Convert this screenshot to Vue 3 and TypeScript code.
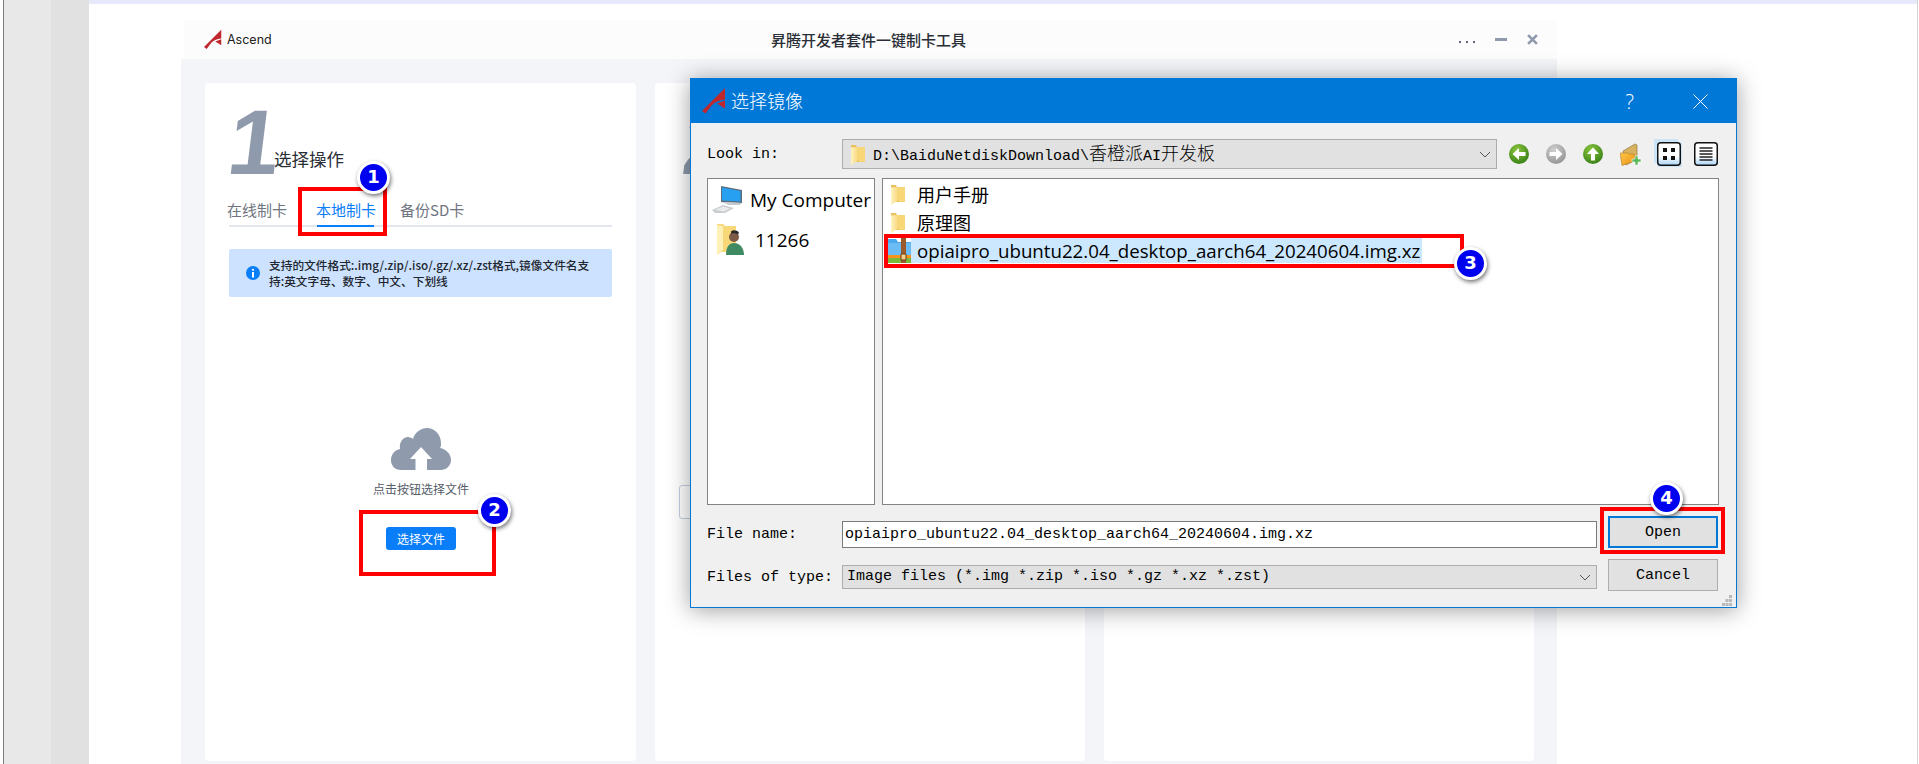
<script setup lang="ts">
const tabs = ['在线制卡', '本地制卡', '备份SD卡'];
const folders = ['用户手册', '原理图'];
const marks = [1, 2, 3, 4];
const fileName = 'opiaipro_ubuntu22.04_desktop_aarch64_20240604.img.xz';
</script>

<template>
  <div class="page">
    <svg class="defs" width="0" height="0" aria-hidden="true">
      <defs>
        <linearGradient id="folderFill" x1="0" x2="1" y1="0" y2="0">
          <stop offset="0" stop-color="#fff3c4" />
          <stop offset="1" stop-color="#f7d36f" />
        </linearGradient>
        <radialGradient id="greenFill" cx="0.4" cy="0.3" r="0.8">
          <stop offset="0" stop-color="#8cc63f" />
          <stop offset="1" stop-color="#2f7a12" />
        </radialGradient>
        <radialGradient id="grayFill" cx="0.4" cy="0.3" r="0.8">
          <stop offset="0" stop-color="#d0d0d0" />
          <stop offset="1" stop-color="#8f8f8f" />
        </radialGradient>
        <linearGradient id="buttonFill" x1="0" x2="0" y1="0" y2="1">
          <stop offset="0" stop-color="#ffffff" />
          <stop offset="0.6" stop-color="#ffffff" />
          <stop offset="1" stop-color="#a9d3f7" />
        </linearGradient>
        <linearGradient id="newFolderFill" x1="0" x2="1" y1="0" y2="1">
          <stop offset="0" stop-color="#ffc94d" />
          <stop offset="1" stop-color="#ea8f10" />
        </linearGradient>
        <symbol id="logo" viewBox="0 0 24 26">
          <path d="M0 23 23 0V11.500C17 12 12.500 14 9.500 17.500L3.500 25.500Z" fill="#c0272d" />
          <path d="M15 15.500 23 12.500V20.500z" fill="#c0272d" />
        </symbol>
        <symbol id="folder" viewBox="0 0 14 21">
          <path d="M0 1h5l1 2h8v15H2l-2 3z" fill="#e9c25f" />
          <path d="M0 3.500 8 3v13L0 21z" fill="url(#folderFill)" />
          <path d="M8 3h6v15H8z" fill="#f8d779" />
        </symbol>
      </defs>
    </svg>

    <div class="rail-edge"></div>
    <div class="rail-light"></div>
    <div class="rail-dark"></div>

    <main class="main">
      <div class="strip"></div>
      <section class="window">
        <header class="win-head">
          <div class="brand">
            <svg class="brand-logo"><use href="#logo" /></svg>
            <span class="brand-name">Ascend</span>
          </div>
          <div class="win-title">昇腾开发者套件一键制卡工具</div>
          <div class="win-ctrls">
            <span class="dots"><i></i><i></i><i></i></span>
            <span class="minus"></span>
            <svg class="close" viewBox="0 0 10 10">
              <path d="M1 1l8 8M9 1l-8 8" stroke="#8f9aac" stroke-width="2.400" fill="none" />
            </svg>
          </div>
        </header>

        <div class="win-body">
          <article class="card">
            <div class="step">
              <span class="step-num">1</span>
              <span class="step-title">选择操作</span>
            </div>
            <nav class="tabs">
              <span v-for="(t, i) in tabs" :key="t" class="tab" :class="{ active: i === 1 }">{{ t }}</span>
            </nav>
            <div class="notice">
              <svg class="notice-icon" viewBox="0 0 14 14">
                <circle cx="7" cy="7" r="7" fill="#0a7df9" />
                <circle cx="7" cy="3.800" r="1.100" fill="#fff" />
                <path d="M6 6h2v5.500H6z" fill="#fff" />
              </svg>
              <p>支持的文件格式:.img/.zip/.iso/.gz/.xz/.zst格式,镜像文件名支持:英文字母、数字、中文、下划线</p>
            </div>
            <div class="upload">
              <svg class="cloud" viewBox="0 0 60 42">
                <path d="M10 42C4 42 0 38 0 32c0-6 4-10 9-11C8 14 12 9 17 9c2 0 4 1 5 2C24 4 30 0 36 0c8 0 14 7 14 15 0 2 0 4-1 5 6 1 11 6 11 12 0 6-5 10-10 10z" fill="#8f9aac" />
                <path d="M30 19 41 31h-5v11H24.500V31H19z" fill="#fff" />
              </svg>
              <div class="upload-text">点击按钮选择文件</div>
              <button class="upload-btn">选择文件</button>
            </div>
          </article>

          <article class="card">
            <div class="step">
              <span class="step-num step-num-hidden">2</span>
            </div>
            <div class="ghost-input"></div>
          </article>

          <article class="card"></article>
        </div>
      </section>
    </main>

    <div class="rail-line"></div>

    <!-- file dialog floating over the app -->
    <section class="dialog">
      <header class="dlg-title">
        <svg class="dlg-logo"><use href="#logo" /></svg>
        <span class="dlg-name">选择镜像</span>
        <span class="dlg-help">?</span>
        <svg class="dlg-close" viewBox="0 0 15 15">
          <path d="M.500.500l14 14M14.500.500l-14 14" stroke="#fff" stroke-width="1" fill="none" />
        </svg>
      </header>

      <div class="dlg-body">
        <div class="row-top">
          <label class="dlg-label">Look in:</label>
          <div class="combo combo-path">
            <svg class="path-folder"><use href="#folder" /></svg>
            <span class="mono path-text">D:\BaiduNetdiskDownload\<span class="cjk">香橙派</span>AI<span class="cjk">开发板</span></span>
            <svg class="chev" viewBox="0 0 12 7"><path d="M1 1l5 5 5-5" stroke="#555" fill="none" /></svg>
          </div>
          <div class="tools">
            <svg class="round" viewBox="0 0 20 20">
              <circle cx="10" cy="10" r="10" fill="url(#greenFill)" />
              <path d="M3.500 10 10 4v4h6.500v4H10v4z" fill="#fff" />
            </svg>
            <svg class="round" viewBox="0 0 20 20">
              <circle cx="10" cy="10" r="10" fill="url(#grayFill)" />
              <path d="M16.500 10 10 4v4H3.500v4H10v4z" fill="#fff" />
            </svg>
            <svg class="round" viewBox="0 0 20 20">
              <circle cx="10" cy="10" r="10" fill="url(#greenFill)" />
              <path d="M10 3.500 16 10h-4v6.500H8V10H4z" fill="#fff" />
            </svg>
            <svg class="new-folder" viewBox="0 0 22 23">
              <path d="M3 8 15 1l2 1v14L6 22z" fill="#d8b25f" stroke="#8a6a34" stroke-width=".6" />
              <path d="M0 10h8l1 1h5l1 7L2 22.500z" fill="url(#newFolderFill)" stroke="#a86f1c" stroke-width=".5" />
              <path d="M15 13h3v3h3v3h-3v3h-3v-3h-3v-3h3z" fill="#5cb85c" stroke="#fff" stroke-width=".6" />
            </svg>
            <span class="view-btn view-on">
              <svg viewBox="0 0 24 24">
                <rect x=".750" y=".750" width="22.500" height="22.500" rx="3" fill="url(#buttonFill)" stroke="#111" stroke-width="1.500" />
                <path d="M6 6h4v4H6zM14 6h4v4h-4zM6 14h4v4H6zM14 14h4v4h-4z" fill="#111" />
              </svg>
            </span>
            <span class="view-btn">
              <svg viewBox="0 0 24 24">
                <rect x=".750" y=".750" width="22.500" height="22.500" rx="3" fill="url(#buttonFill)" stroke="#111" stroke-width="1.500" />
                <path d="M5.500 6h13M5.500 9h13M5.500 12h13M5.500 15h13M5.500 18h13" stroke="#222" stroke-width="1.300" />
              </svg>
            </span>
          </div>
        </div>

        <div class="row-lists">
          <aside class="side-list">
            <div class="side-item side-pc">
              <svg class="pc-icon" viewBox="0 0 31 27">
                <path d="M9 0l21 4v13L9 16z" fill="#5a6d7d" />
                <path d="M10 1.500 28.500 5v10.500L10 14.500z" fill="#27a0f2" />
                <path d="M9 16l21 1-2 2-11 0z" fill="#c4cbd0" />
                <path d="M0 24l11-5 11 3-9 5H3z" fill="#c9cdd0" />
                <path d="M3 24l8-3.500 7 2-6 3z" fill="#e9ebec" />
              </svg>
              <span>My Computer</span>
            </div>
            <div class="side-item side-user">
              <svg class="user-icon" viewBox="0 0 27 31">
                <path d="M0 0h6l2 2h11v26H4l-4 3z" fill="#f8d779" />
                <path d="M0 1l6 1v24l-6 5z" fill="#fff0b8" />
                <circle cx="17" cy="13" r="5" fill="#7d5a46" />
                <path d="M14 7.500c2-2 6-1.500 8 1l-1 2c-2-1.500-5-1.500-7-1z" fill="#2a2a2a" />
                <path d="M9 31c0-8 3-12 8-12s10 4 10 12z" fill="#3f8a63" />
              </svg>
              <span>11266</span>
            </div>
          </aside>
          <div class="file-list">
            <div v-for="f in folders" :key="f" class="file-row">
              <svg class="row-folder"><use href="#folder" /></svg>
              <span class="cn">{{ f }}</span>
            </div>
            <div class="file-row file-sel">
              <svg class="zip-icon" viewBox="0 0 23 25">
                <path d="M0 1h8l2 3h13v14H0z" fill="#4aa8ec" />
                <path d="M0 5h23v13H0z" fill="#6bbcf5" />
                <path d="M0 17h23v3H0z" fill="#f7941d" />
                <path d="M0 20h23v5H0z" fill="#7ab93a" />
                <path d="M13 0h5v25h-5z" fill="#9a5a2b" />
                <path d="M13 16h5v6h-5z" fill="#f5d08a" stroke="#6b3d1a" />
              </svg>
              <span class="sel-text">{{ fileName }}</span>
            </div>
          </div>
        </div>

        <div class="row-file">
          <label class="dlg-label">File name:</label>
          <div class="name-input mono">{{ fileName }}</div>
          <button class="dlg-btn dlg-primary mono">Open</button>
        </div>
        <div class="row-type">
          <label class="dlg-label">Files of type:</label>
          <div class="combo combo-type">
            <span class="mono">Image files (*.img *.zip *.iso *.gz *.xz *.zst)</span>
            <svg class="chev" viewBox="0 0 12 7"><path d="M1 1l5 5 5-5" stroke="#555" fill="none" /></svg>
          </div>
          <button class="dlg-btn mono">Cancel</button>
        </div>
      </div>

      <svg class="grip" viewBox="0 0 10 11">
        <path d="M7 0h3v3H7zM3.500 4H6.500v3H3.500zM7 4h3v3H7zM0 8h3v3H0zM3.500 8H6.500v3H3.500zM7 8h3v3H7z" fill="#b9b9b9" />
      </svg>
    </section>

    <!-- tutorial annotations drawn on top of the screenshot -->
    <div class="frame frame-1"></div>
    <div class="frame frame-2"></div>
    <div class="frame frame-3"></div>
    <div class="frame frame-4"></div>
    <span v-for="m in marks" :key="m" class="badge" :class="`badge-${m}`">{{ m }}</span>
  </div>
</template>

<style scoped>
.page {
  position: relative;
  display: flex;
  width: 1919px;
  height: 764px;
  overflow: hidden;
  background: #fff;
  font-family: "Noto Sans CJK SC", "Noto Sans", sans-serif;
}

.defs {
  position: absolute;
}

.rail-edge {
  width: 3px;
  border-right: 1px solid #7c7c7c;
}

.rail-light {
  width: 47px;
  background: #e8e8e8;
}

.rail-dark {
  width: 38px;
  background: #e1e1e1;
}

.main {
  flex: 1;
  min-width: 0;
}

.rail-line {
  width: 1px;
  margin-right: 1px;
  background: #d4d4d4;
}

.strip {
  height: 4px;
  background: #e8e8fb;
}

.window {
  width: 1376px;
  height: 744px;
  margin: 16px 0 0 92px;
  display: flex;
  flex-direction: column;
}

.win-head {
  display: grid;
  grid-template-columns: 1fr auto 1fr;
  align-items: center;
  height: 39px;
  margin-left: 3px;
  padding: 0 19px 0 20px;
  background: #fcfcfc;
}

.brand {
  display: flex;
  align-items: center;
  gap: 5px;
}

.brand-logo {
  width: 18px;
  height: 21px;
}

.brand-name {
  font-family: "Inter", sans-serif;
  font-size: 12.500px;
  color: #222;
}

.win-title {
  margin-right: 5px;
  font-size: 15px;
  font-weight: 500;
  color: #2a2e36;
  line-height: 20px;
}

.win-ctrls {
  display: flex;
  align-items: center;
  justify-content: flex-end;
  gap: 20px;
}

.dots {
  display: flex;
  gap: 5px;
  margin-top: 4px;
}

.dots i {
  width: 2px;
  height: 2px;
  background: #5d6778;
}

.minus {
  width: 12px;
  height: 3px;
  background: #8f9aac;
}

.close {
  width: 11px;
  height: 11px;
}

.win-body {
  flex: 1;
  display: grid;
  grid-template-columns: 431px 430px 430px;
  gap: 19px;
  padding: 24px 23px 3px 24px;
  background: #f4f5f9;
}

.card {
  padding: 22px 24px 0;
  background: #fff;
  border-radius: 4px;
}

.step {
  display: flex;
  align-items: flex-end;
  height: 74px;
}

.step-num {
  display: inline-block;
  width: 45px;
  font: 700 92px/74px "Liberation Sans", sans-serif;
  color: #8f9aac;
  transform: skewX(-7deg);
}

.step-num-hidden {
  margin-left: 5px;
}

.step-title {
  font-size: 17.500px;
  line-height: 24px;
  margin-bottom: 8px;
  color: #2a2e36;
}

.tabs {
  display: flex;
  height: 28px;
  margin-top: 18px;
  border-bottom: 2px solid #e3e6ef;
  font-size: 15px;
  line-height: 26px;
  color: #6f7580;
}

.tab {
  position: relative;
  margin-left: 29px;
  height: 28px;
}

.tab:first-child {
  margin-left: -2px;
}

.tab:last-child {
  margin-left: 24px;
}

.tab.active {
  color: #0a7df9;
}

.tab.active::after {
  content: "";
  position: absolute;
  left: 1px;
  right: 2px;
  bottom: -2px;
  height: 2px;
  background: #0a7df9;
}

.notice {
  display: flex;
  align-items: center;
  gap: 9px;
  height: 48px;
  margin-top: 22px;
  padding: 0 19px 0 17px;
  background: #cce2ff;
  border-radius: 2px;
}

.notice-icon {
  flex: none;
  width: 14px;
  height: 14px;
}

.notice p {
  margin: 0;
  font-size: 11.700px;
  font-weight: 500;
  line-height: 16px;
  color: #22262e;
}

.upload {
  display: flex;
  flex-direction: column;
  align-items: center;
  margin-top: 131px;
  padding-left: 1px;
}

.cloud {
  width: 60px;
  height: 42px;
}

.upload-text {
  margin-top: 11px;
  font-size: 12px;
  line-height: 16px;
  color: #555c69;
}

.upload-btn {
  width: 70px;
  height: 23px;
  margin-top: 30px;
  padding: 0;
  border: 0;
  border-radius: 3px;
  background: #0a7df9;
  color: #fff;
  font: 12px/23px "Noto Sans CJK SC", sans-serif;
}

.ghost-input {
  width: 200px;
  height: 32px;
  margin-top: 306px;
  border: 1px solid #c5cde0;
  border-radius: 3px;
}

.dialog {
  position: absolute;
  left: 690px;
  top: 78px;
  width: 1047px;
  height: 530px;
  box-sizing: border-box;
  border: 1px solid #0078d7;
  background: #f0f0f0;
  box-shadow: 0 2px 22px rgba(0, 0, 0, 0.38);
  color: #000;
}

.dlg-title {
  display: flex;
  align-items: center;
  height: 44px;
  background: #0078d7;
  color: #fff;
}

.dlg-logo {
  width: 24px;
  height: 26px;
  margin-left: 11px;
}

.dlg-name {
  margin: -2px 0 0 5px;
  font-size: 18px;
  font-weight: 300;
}

.dlg-help {
  margin-left: auto;
  font: 300 20px "Open Sans", sans-serif;
}

.dlg-close {
  width: 15px;
  height: 15px;
  margin: 0 28px 0 59px;
}

.dlg-body {
  display: flex;
  flex-direction: column;
  padding: 16px 17px 0 16px;
}

.dlg-label {
  flex: none;
  width: 135px;
  font: 15px/20px "Liberation Mono", "Noto Sans CJK SC", monospace;
}

.row-top .dlg-label {
  padding-top: 2px;
}

.mono {
  font: 15px/20px "Liberation Mono", "Noto Sans CJK SC", monospace;
  white-space: pre;
}

.cjk {
  font-family: "Noto Sans CJK SC", sans-serif;
  font-size: 18px;
  font-weight: 300;
}

.row-top {
  display: flex;
  align-items: center;
  height: 30px;
}

.combo {
  position: relative;
  display: flex;
  align-items: center;
  box-sizing: border-box;
  border: 1px solid #adadad;
  background: #e1e1e1;
}

.combo-path {
  width: 655px;
  height: 30px;
}

.path-folder {
  width: 14px;
  height: 21px;
  margin: 0 8px 0 8px;
}

.chev {
  position: absolute;
  right: 5px;
  top: 50%;
  width: 12px;
  height: 7px;
  margin-top: -3px;
}

.tools {
  display: flex;
  align-items: center;
  gap: 17px;
  margin-left: 12px;
}

.round {
  width: 20px;
  height: 20px;
}

.new-folder {
  width: 22px;
  height: 23px;
}

.view-btn {
  display: block;
  width: 24px;
  height: 24px;
  margin-left: -4px;
}

.view-btn svg {
  display: block;
  width: 24px;
  height: 24px;
}

.view-on {
  margin-left: -2px;
  background: #cce4f7;
  box-shadow: -3px -3px 0 0 #cce4f7, 1px 1px 0 0 #cce4f7;
}

.row-lists {
  display: flex;
  gap: 7px;
  height: 327px;
  margin-top: 9px;
}

.side-list,
.file-list {
  box-sizing: border-box;
  border: 1px solid #838383;
  background: #fff;
}

.side-list {
  width: 168px;
}

.file-list {
  flex: 1;
  padding-top: 1px;
}

.side-item {
  display: flex;
  align-items: center;
  font-family: "Open Sans", sans-serif;
  font-size: 19px;
  line-height: 24px;
}

.side-pc {
  margin-top: 7px;
  padding-left: 4px;
  gap: 7px;
}

.side-user {
  margin-top: 11px;
  padding-left: 9px;
  gap: 11px;
}

.pc-icon {
  width: 31px;
  height: 27px;
}

.user-icon {
  width: 27px;
  height: 31px;
}

.file-row {
  display: flex;
  align-items: center;
  height: 28px;
  padding-left: 8px;
}

.cn {
  margin-left: 12px;
  font-size: 18px;
  line-height: 24px;
}

.row-folder {
  width: 14px;
  height: 21px;
}

.file-sel {
  margin-top: 2px;
  padding-left: 5px;
  height: 25px;
}

.zip-icon {
  flex: none;
  width: 23px;
  height: 25px;
}

.sel-text {
  height: 25px;
  padding: 0 2px 0 6px;
  background: #cce8ff;
  font-family: "Open Sans", sans-serif;
  font-size: 18.700px;
  line-height: 26px;
  white-space: nowrap;
}

.row-file,
.row-type {
  display: flex;
  height: 32px;
}

.row-file {
  align-items: flex-end;
  margin-top: 11px;
}

.row-file .dlg-label {
  margin-bottom: 3px;
}

.row-type {
  align-items: center;
  margin-top: 11px;
}

.row-type .dlg-label {
  margin-top: 6px;
}

.name-input {
  width: 755px;
  height: 27px;
  box-sizing: border-box;
  padding-left: 2px;
  border: 1px solid #7a7a7a;
  background: #fff;
  line-height: 26px;
  overflow: hidden;
}

.combo-type {
  width: 755px;
  height: 24px;
  margin-top: 4px;
  padding-left: 4px;
}

.dlg-btn {
  width: 110px;
  height: 32px;
  margin-left: 11px;
  padding: 2px 0 0;
  box-sizing: border-box;
  border: 1px solid #adadad;
  background: #e1e1e1;
  color: #000;
}

.dlg-primary {
  border: 2px solid #0078d7;
}

.grip {
  position: absolute;
  right: 4px;
  bottom: 1px;
  width: 10px;
  height: 11px;
}

.frame {
  position: absolute;
  box-sizing: border-box;
  border: 4px solid #f00;
  pointer-events: none;
}

.frame-1 {
  left: 298px;
  top: 187px;
  width: 89px;
  height: 49px;
}

.frame-2 {
  left: 359px;
  top: 510px;
  width: 137px;
  height: 66px;
}

.frame-3 {
  left: 884px;
  top: 234px;
  width: 580px;
  height: 34px;
}

.frame-4 {
  left: 1600px;
  top: 507px;
  width: 125px;
  height: 47px;
}

.badge {
  position: absolute;
  box-sizing: border-box;
  width: 33px;
  height: 33px;
  margin: -16px 0 0 -16px;
  border: 3.500px solid #fff;
  border-radius: 50%;
  background: #0000f0;
  box-shadow: 1px 2px 4px rgba(0, 0, 0, 0.55);
  color: #fff;
  font: 700 18px/26px "DejaVu Sans", sans-serif;
  text-align: center;
}

.badge-1 {
  left: 373px;
  top: 177px;
}

.badge-2 {
  left: 494px;
  top: 510px;
}

.badge-3 {
  left: 1470px;
  top: 263px;
}

.badge-4 {
  left: 1666px;
  top: 498px;
}
</style>
